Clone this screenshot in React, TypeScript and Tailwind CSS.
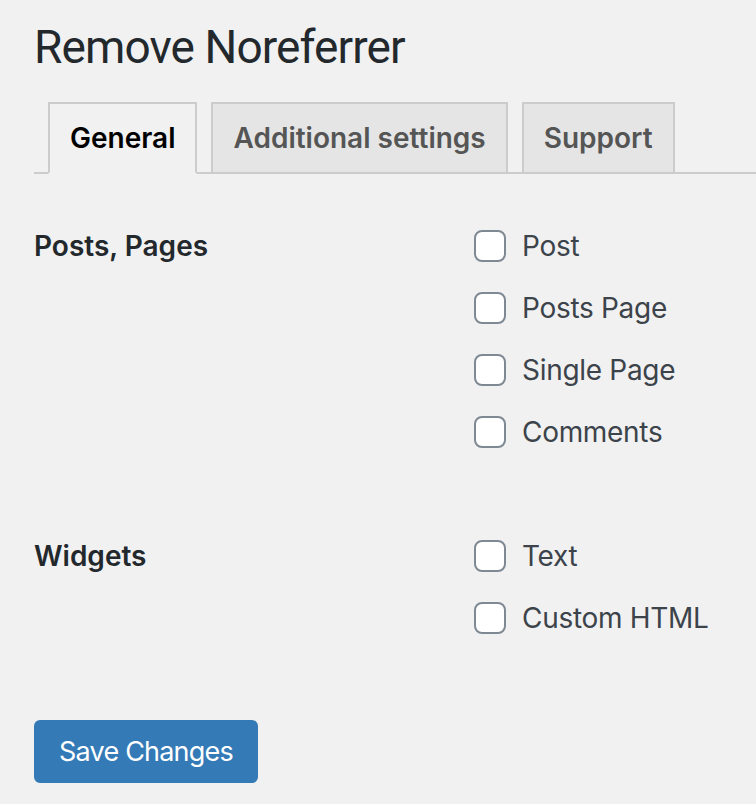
import React from "react";

function Check({ label }: { label: string }) {
  return (
    <div className="flex h-[62px] items-center">
      <span className="box-border h-[32px] w-[32px] shrink-0 rounded-[8px] border-2 border-[#7e8993] bg-white" />
      <span className="ml-[16px] text-[28px] leading-[48px] tracking-[-0.3px] text-[#3c434a]">{label}</span>
    </div>
  );
}

function Section({ title, items }: { title: string; items: string[] }) {
  return (
    <div className="flex">
      <div className="w-[440px] shrink-0 pt-[7px] text-[28px] font-semibold leading-[48px] text-[#23282d]">
        {title}
      </div>
      <div className="flex flex-col">
        {items.map((i) => (
          <Check key={i} label={i} />
        ))}
      </div>
    </div>
  );
}

export default function App() {
  return (
    <div
      className="min-h-screen overflow-hidden bg-[#f1f1f1] pl-[34px] pt-[18px]"
      style={{ fontFamily: "Inter, 'Noto Sans', sans-serif" }}
    >
      <h1 className="font-['Roboto',sans-serif] text-[46px] font-normal leading-[58px] tracking-[-0.9px] text-[#23282d]">
        Remove Noreferrer
      </h1>
      <div className="mt-[26px] flex border-b-2 border-[#cccccc]">
        <div className="relative -mb-[2px] ml-[14px] border-2 border-[#cccccc] border-b-[#f1f1f1] bg-[#f1f1f1] px-[20px] py-[10px] text-[28px] font-semibold leading-[48px] text-black">
          General
        </div>
        <div className="ml-[14px] border-2 border-b-0 border-[#cccccc] bg-[#e5e5e5] px-[20px] py-[10px] text-[28px] font-semibold leading-[48px] text-[#555555]">
          Additional settings
        </div>
        <div className="ml-[14px] border-2 border-b-0 border-[#cccccc] bg-[#e5e5e5] px-[20px] py-[10px] text-[28px] font-semibold leading-[48px] text-[#555555]">
          Support
        </div>
      </div>
      <div className="mt-[41px] flex flex-col gap-[62px]">
        <Section title="Posts, Pages" items={["Post", "Posts Page", "Single Page", "Comments"]} />
        <Section title="Widgets" items={["Text", "Custom HTML"]} />
      </div>
      <button className="mt-[71px] h-[63px] w-[224px] rounded-[6px] bg-[#337ab7] text-[27px] leading-[40px] tracking-[-0.8px] text-white">
        Save Changes
      </button>
    </div>
  );
}
